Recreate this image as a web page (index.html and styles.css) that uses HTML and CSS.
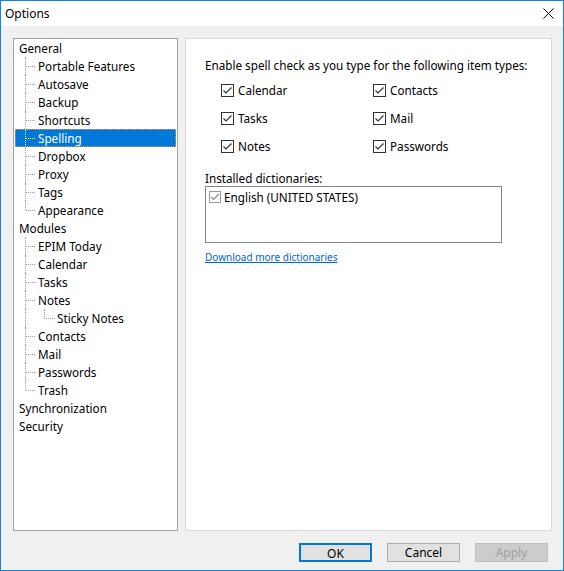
FILE: index.html
```html
<!DOCTYPE html>
<html lang="en">
<head>
    <meta charset="UTF-8">
    <title>Options</title>
    <link rel="stylesheet" href="styles.css">
</head>
<body>
<div class="window">
    <div class="titlebar">
        <span class="title">Options</span>
        <svg class="close" width="11" height="11" viewBox="0 0 11 11">
            <path d="M0.5 0.5 L10.5 10.5 M10.5 0.5 L0.5 10.5" stroke="#000" stroke-width="1" fill="none"/>
        </svg>
    </div>

    <div class="content">
        <div class="tree">
            <div class="row lvl0">General</div>
            <div class="row lvl1">Portable Features</div>
            <div class="row lvl1">Autosave</div>
            <div class="row lvl1">Backup</div>
            <div class="row lvl1">Shortcuts</div>
            <div class="row lvl1 selected">Spelling</div>
            <div class="row lvl1">Dropbox</div>
            <div class="row lvl1">Proxy</div>
            <div class="row lvl1">Tags</div>
            <div class="row lvl1 last">Appearance</div>
            <div class="row lvl0">Modules</div>
            <div class="row lvl1">EPIM Today</div>
            <div class="row lvl1">Calendar</div>
            <div class="row lvl1">Tasks</div>
            <div class="row lvl1">Notes</div>
            <div class="row lvl2">Sticky Notes</div>
            <div class="row lvl1">Contacts</div>
            <div class="row lvl1">Mail</div>
            <div class="row lvl1">Passwords</div>
            <div class="row lvl1 last">Trash</div>
            <div class="row lvl0">Synchronization</div>
            <div class="row lvl0">Security</div>
        </div>

        <div class="page">
            <div class="caption">Enable spell check as you type for the following item types:</div>
            <div class="types">
                <label class="check"><span class="box"></span>Calendar</label>
                <label class="check"><span class="box"></span>Contacts</label>
                <label class="check"><span class="box"></span>Tasks</label>
                <label class="check"><span class="box"></span>Mail</label>
                <label class="check"><span class="box"></span>Notes</label>
                <label class="check"><span class="box"></span>Passwords</label>
            </div>

            <div class="caption dict-caption">Installed dictionaries:</div>
            <div class="listbox">
                <div class="list-item"><span class="box small"></span>English (UNITED STATES)</div>
            </div>
            <a class="link" href="#">Download more dictionaries</a>
        </div>
    </div>

    <div class="buttons">
        <button class="btn default">OK</button>
        <button class="btn">Cancel</button>
        <button class="btn" disabled>Apply</button>
    </div>
</div>
</body>
</html>
```

FILE: styles.css
```css
body {
    margin: 0;
    font-family: "Noto Sans", "Liberation Sans", sans-serif;
    font-size: 11.7px;
    color: #000;
}

.window {
    width: 564px;
    height: 571px;
    box-sizing: border-box;
    border: 1px solid #1883d7;
    background-color: #f0f0f0;
    display: flex;
    flex-direction: column;
}

.titlebar {
    height: 25px;
    background-color: #fff;
    display: flex;
    align-items: center;
    justify-content: space-between;
    padding: 0 9px 0 4px;
}

.title {
    font-size: 12px;
}

.content {
    display: flex;
    gap: 7px;
    padding: 12px 11px 0 12px;
    height: 493px;
}

/* tree on the left */
.tree {
    width: 165px;
    box-sizing: border-box;
    border: 1px solid #a0a0a0;
    background-color: #fff;
    padding: 0 1px;
}

.row {
    position: relative;
    height: 18px;
    line-height: 18px;
    white-space: nowrap;
}

.lvl0 { padding-left: 4px; }
.lvl1 { padding-left: 23px; }
.lvl2 { padding-left: 42px; }

.lvl1::before, .lvl2::before {
    content: "";
    position: absolute;
    left: 10px;
    top: 0;
    height: 18px;
    border-left: 1px dotted #a0a0a0;
}

.lvl1.last::before {
    height: 9px;
}

.lvl1::after {
    content: "";
    position: absolute;
    left: 11px;
    top: 9px;
    width: 9px;
    border-top: 1px dotted #a0a0a0;
}

.lvl2::after {
    content: "";
    position: absolute;
    left: 29px;
    top: 0;
    width: 10px;
    height: 9px;
    border-left: 1px dotted #a0a0a0;
    border-bottom: 1px dotted #a0a0a0;
}

.selected {
    background-color: #0078d7;
    color: #fff;
    outline: 1px dotted #f59a3c;
    outline-offset: -1px;
}

.selected::before, .selected::after {
    border-color: #fff;
}

/* page on the right */
.page {
    flex: 1;
    box-sizing: border-box;
    border: 1px solid #dadada;
    background-color: #fff;
    padding: 18px 0 0 19px;
}

.caption {
    line-height: 16px;
}

.types {
    display: grid;
    grid-template-columns: 152px 152px;
    row-gap: 12px;
    margin: 9px 0 0 16px;
}

.check {
    display: flex;
    align-items: center;
    gap: 4px;
    line-height: 16px;
}

.box {
    width: 13px;
    height: 13px;
    box-sizing: border-box;
    border: 1px solid #333;
    background: #fff url("data:image/svg+xml,%3Csvg xmlns='http://www.w3.org/2000/svg' width='11' height='11'%3E%3Cpath d='M1.5 5.5 L4 8 L9.5 2.5' stroke='%23333' stroke-width='1.2' fill='none'/%3E%3C/svg%3E") no-repeat center;
}

.box.small {
    width: 12px;
    height: 12px;
    border-color: #999;
    background-image: url("data:image/svg+xml,%3Csvg xmlns='http://www.w3.org/2000/svg' width='10' height='10'%3E%3Cpath d='M1 5 L3.5 7.5 L9 2' stroke='%23888' stroke-width='1.2' fill='none'/%3E%3C/svg%3E");
}

.dict-caption {
    margin-top: 16px;
}

.listbox {
    width: 297px;
    height: 57px;
    box-sizing: border-box;
    border: 1px solid #828282;
    padding: 2px 3px;
}

.list-item {
    display: flex;
    align-items: center;
    gap: 3px;
    line-height: 16px;
}

.link {
    display: inline-block;
    margin-top: 7px;
    font-size: 10px;
    color: #0066cc;
}

/* dialog buttons */
.buttons {
    display: flex;
    justify-content: flex-end;
    gap: 15px;
    padding: 12px 15px 0 0;
}

.btn {
    width: 73px;
    height: 19px;
    box-sizing: border-box;
    border: 1px solid #adadad;
    background-color: #e1e1e1;
    font-family: inherit;
    font-size: 12px;
    color: #000;
    padding: 0;
}

.btn.default {
    border: 2px solid #0078d7;
}

.btn:disabled {
    background-color: #cccccc;
    border-color: #bfbfbf;
    color: #a0a0a0;
}
```
